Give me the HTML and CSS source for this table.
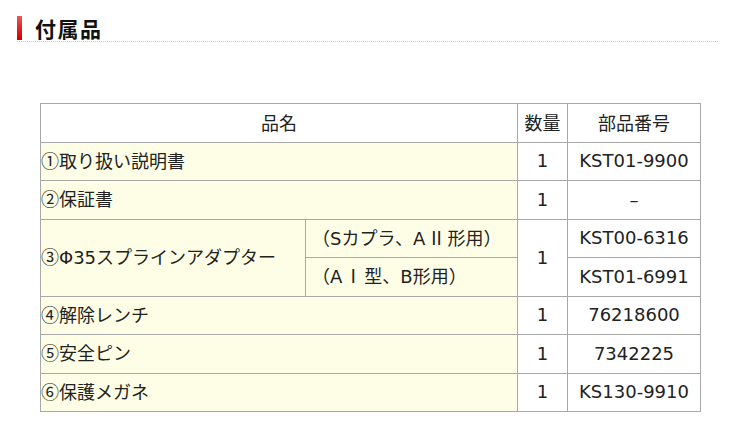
FILE: index.html
```html
<!DOCTYPE html>
<html lang="ja">
<head>
<meta charset="utf-8">
<title>付属品</title>
<link rel="stylesheet" href="styles.css">
</head>
<body>
<div class="page">
  <div class="heading">
    <span class="bar"></span>
    <h2 class="title">付属品</h2>
  </div>
  <table class="parts">
    <colgroup>
      <col class="c-name-a">
      <col class="c-name-b">
      <col class="c-qty">
      <col class="c-no">
    </colgroup>
    <thead>
      <tr>
        <th colspan="2">品名</th>
        <th>数量</th>
        <th>部品番号</th>
      </tr>
    </thead>
    <tbody>
      <tr>
        <td colspan="2" class="name"><span class="circ">①</span><span class="cj">取り扱い説明書</span></td>
        <td class="qty">1</td>
        <td class="no">KST01-9900</td>
      </tr>
      <tr>
        <td colspan="2" class="name"><span class="circ">②</span><span class="cj">保証書</span></td>
        <td class="qty">1</td>
        <td class="no">–</td>
      </tr>
      <tr>
        <td rowspan="2" class="name"><span class="circ">③</span>Φ35<span class="cj">スプラインアダプター</span></td>
        <td class="name sub"><span class="cj">（</span>S<span class="cj">カプラ、</span>A<span class="thin">Ⅱ</span><span class="cj">形用）</span></td>
        <td rowspan="2" class="qty">1</td>
        <td class="no">KST00-6316</td>
      </tr>
      <tr>
        <td class="name sub"><span class="cj">（</span>A<span class="thin">Ⅰ</span><span class="cj">型、</span>B<span class="cj">形用）</span></td>
        <td class="no">KST01-6991</td>
      </tr>
      <tr>
        <td colspan="2" class="name"><span class="circ">④</span><span class="cj">解除レンチ</span></td>
        <td class="qty">1</td>
        <td class="no">76218600</td>
      </tr>
      <tr>
        <td colspan="2" class="name"><span class="circ">⑤</span><span class="cj">安全ピン</span></td>
        <td class="qty">1</td>
        <td class="no">7342225</td>
      </tr>
      <tr>
        <td colspan="2" class="name"><span class="circ">⑥</span><span class="cj">保護メガネ</span></td>
        <td class="qty">1</td>
        <td class="no">KS130-9910</td>
      </tr>
    </tbody>
  </table>
</div>
</body>
</html>
```
FILE: styles.css
```css
html, body {
  margin: 0;
  padding: 0;
  background: #ffffff;
}

body {
  font-family: "DejaVu Sans", "Noto Sans CJK JP", sans-serif;
  color: #222222;
}

.page {
  padding-top: 16px;
}

.heading {
  display: flex;
  align-items: flex-start;
  gap: 13px;
  margin-left: 17px;
  width: 701px;
  height: 25px;
  border-bottom: 1px dotted #c8c8c8;
}

.bar {
  display: block;
  width: 5px;
  height: 24px;
  background: linear-gradient(to bottom, #ea5a5a 0%, #e02020 55%, #d40000 100%);
}

.title {
  margin: 0;
  font-family: "Noto Sans CJK JP", sans-serif;
  font-size: 21px;
  font-weight: 700;
  line-height: 24px;
  letter-spacing: 1.5px;
  color: #111111;
}

.parts {
  margin: 61px 0 0 40px;
  border-collapse: collapse;
  table-layout: fixed;
  width: 661px;
  font-size: 18px;
}

.c-name-a { width: 265px; }
.c-name-b { width: 212px; }
.c-qty { width: 50px; }
.c-no { width: 133px; }

.parts th,
.parts td {
  border: 1px solid #a8a8a8;
  height: 37.5px;
  padding: 0;
  vertical-align: middle;
  white-space: nowrap;
  line-height: 1.2;
}

.parts th {
  font-family: "Noto Sans CJK JP", sans-serif;
  font-weight: 400;
  text-align: center;
  background: #ffffff;
}

.cj {
  font-family: "Noto Sans CJK JP", sans-serif;
}

.circ {
  display: inline-block;
  width: 18px;
  text-align: center;
  font-family: "Noto Sans CJK JP", sans-serif;
}

.thin {
  font-family: "Noto Sans CJK JP", sans-serif;
  padding: 0 2px;
}

.name {
  background: #fefee6;
  text-align: left;
  padding-left: 5px;
}

.name.sub {
  padding-left: 6px;
}

.qty,
.no {
  text-align: center;
  background: #ffffff;
}
```
